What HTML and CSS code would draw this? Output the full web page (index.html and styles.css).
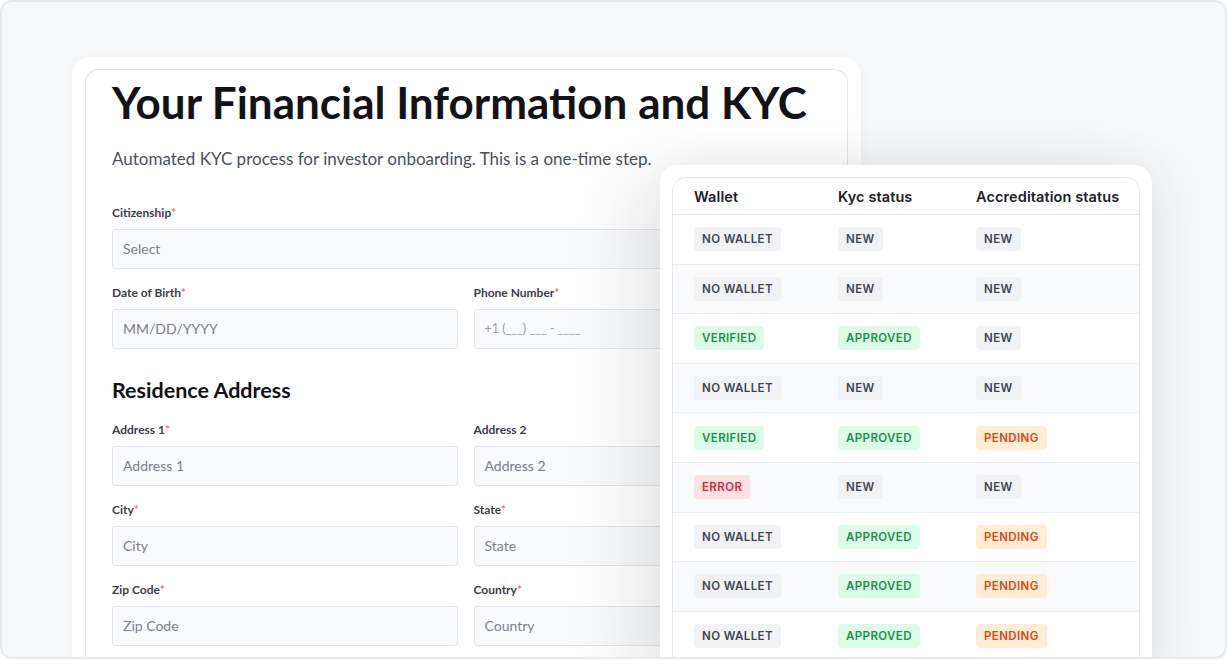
FILE: index.html
```html
<!DOCTYPE html>
<html lang="en">

<head>
    <meta charset="UTF-8" />
    <meta name="viewport" content="width=device-width, initial-scale=1.0" />
    <title>Financial Information and KYC</title>
    <link rel="stylesheet" href="styles.css">
</head>

<body>
    <div class="frame">
        <section class="shell form-shell">
            <div class="card form-card">
                <h1 class="title">Your Financial Information and KYC</h1>
                <p class="lead">Automated KYC process for investor onboarding. This is a one-time step.</p>

                <div class="fields">
                    <div class="field wide">
                        <label>Citizenship<span class="req">*</span></label>
                        <div class="input">Select</div>
                    </div>
                    <div class="field">
                        <label>Date of Birth<span class="req">*</span></label>
                        <div class="input">MM/DD/YYYY</div>
                    </div>
                    <div class="field">
                        <label>Phone Number<span class="req">*</span></label>
                        <div class="input small">+1 (___) ___ - ____</div>
                    </div>
                </div>

                <h2 class="section-title">Residence Address</h2>

                <div class="fields">
                    <div class="field">
                        <label>Address 1<span class="req">*</span></label>
                        <div class="input">Address 1</div>
                    </div>
                    <div class="field">
                        <label>Address 2</label>
                        <div class="input">Address 2</div>
                    </div>
                    <div class="field">
                        <label>City<span class="req">*</span></label>
                        <div class="input">City</div>
                    </div>
                    <div class="field">
                        <label>State<span class="req">*</span></label>
                        <div class="input">State</div>
                    </div>
                    <div class="field">
                        <label>Zip Code<span class="req">*</span></label>
                        <div class="input">Zip Code</div>
                    </div>
                    <div class="field">
                        <label>Country<span class="req">*</span></label>
                        <div class="input">Country</div>
                    </div>
                </div>
            </div>
        </section>

        <section class="shell table-shell">
            <div class="card table-card">
                <div class="row head">
                    <span>Wallet</span>
                    <span>Kyc status</span>
                    <span>Accreditation status</span>
                </div>
                <div class="row">
                    <span><b class="badge">No wallet</b></span>
                    <span><b class="badge">New</b></span>
                    <span><b class="badge">New</b></span>
                </div>
                <div class="row">
                    <span><b class="badge">No wallet</b></span>
                    <span><b class="badge">New</b></span>
                    <span><b class="badge">New</b></span>
                </div>
                <div class="row">
                    <span><b class="badge ok">Verified</b></span>
                    <span><b class="badge ok">Approved</b></span>
                    <span><b class="badge">New</b></span>
                </div>
                <div class="row">
                    <span><b class="badge">No wallet</b></span>
                    <span><b class="badge">New</b></span>
                    <span><b class="badge">New</b></span>
                </div>
                <div class="row">
                    <span><b class="badge ok">Verified</b></span>
                    <span><b class="badge ok">Approved</b></span>
                    <span><b class="badge warn">Pending</b></span>
                </div>
                <div class="row">
                    <span><b class="badge err">Error</b></span>
                    <span><b class="badge">New</b></span>
                    <span><b class="badge">New</b></span>
                </div>
                <div class="row">
                    <span><b class="badge">No wallet</b></span>
                    <span><b class="badge ok">Approved</b></span>
                    <span><b class="badge warn">Pending</b></span>
                </div>
                <div class="row">
                    <span><b class="badge">No wallet</b></span>
                    <span><b class="badge ok">Approved</b></span>
                    <span><b class="badge warn">Pending</b></span>
                </div>
                <div class="row">
                    <span><b class="badge">No wallet</b></span>
                    <span><b class="badge ok">Approved</b></span>
                    <span><b class="badge warn">Pending</b></span>
                </div>
            </div>
        </section>
    </div>
</body>

</html>
```

FILE: styles.css
```css
:root {
    --frame-bg: #f7f8fa;
    --line: #e5e7eb;
    --field-bg: #f9fafb;
    --txt-dark: #111318;
    --txt-label: #3a404b;
    --txt-muted: #4a515c;
    --form-font: "Lato", "Noto Sans", sans-serif;
    --table-font: "Inter", "Roboto", sans-serif;
}

* {
    box-sizing: border-box;
    margin: 0;
    padding: 0;
}

body {
    width: 1227px;
    height: 660px;
    overflow: hidden;
    background: #fff;
}

.frame {
    position: relative;
    width: 1227px;
    height: 659px;
    border: 2px solid #e7e9ed;
    border-radius: 12px;
    background: var(--frame-bg);
    overflow: hidden;
    padding: 55px 0 0 70px;
}

.shell {
    background: rgba(255, 255, 255, 0.85);
    border-radius: 18px;
}

.card {
    background: #fff;
    border: 1px solid var(--line);
    border-radius: 14px;
}

/* form */

.form-shell {
    width: 789px;
    height: 640px;
    padding: 12px 13px 0;
    box-shadow: 0 2px 14px rgba(17, 24, 39, 0.03);
}

.form-card {
    height: 100%;
    padding: 6px 28px 0 26px;
    font-family: var(--form-font);
    border-bottom: none;
    border-radius: 14px 14px 0 0;
}

.title {
    font-size: 44px;
    line-height: 1.2;
    font-weight: 700;
    color: var(--txt-dark);
    letter-spacing: 0;
}

.lead {
    margin-top: 16px;
    font-size: 17px;
    line-height: 27px;
    font-weight: 400;
    color: var(--txt-muted);
}

.fields {
    display: grid;
    grid-template-columns: 1fr 1fr;
    column-gap: 16px;
    row-gap: 16px;
    margin-top: 33px;
}

.section-title + .fields {
    margin-top: 18px;
}

.field.wide {
    grid-column: 1 / -1;
}

.field label {
    display: block;
    font-size: 12px;
    line-height: 16px;
    font-weight: 700;
    color: var(--txt-label);
    margin-bottom: 8px;
}

.req {
    color: #f47171;
}

.input {
    height: 40px;
    display: flex;
    align-items: center;
    padding: 0 10px;
    background: var(--field-bg);
    border: 1px solid #e3e6ea;
    border-radius: 3px;
    font-size: 14px;
    color: #7a808a;
}

.input.small {
    font-size: 12.5px;
    color: #9ca1aa;
}

.section-title {
    margin-top: 27px;
    font-size: 21.5px;
    line-height: 28px;
    font-weight: 700;
    color: var(--txt-dark);
}

/* table */

.table-shell {
    position: absolute;
    left: 658px;
    top: 163px;
    width: 492px;
    height: 520px;
    padding: 12px;
    background: #fff;
    box-shadow: -30px 10px 70px rgba(17, 24, 39, 0.1), 20px 0 50px rgba(17, 24, 39, 0.05);
}

.table-card {
    height: 100%;
    overflow: hidden;
    font-family: var(--table-font);
}

.row {
    display: grid;
    grid-template-columns: 144px 138px 1fr;
    align-items: center;
    height: 49.6px;
    padding-left: 21px;
    border-bottom: 1px solid #eceef1;
}

.row:nth-child(odd) {
    background: #f9fafb;
}

.row.head {
    height: 37px;
    background: #fff;
    font-size: 14.5px;
    font-weight: 600;
    color: #1d2129;
    border-bottom-color: #e7e9ec;
    letter-spacing: 0.1px;
}

.badge {
    display: inline-block;
    height: 24px;
    line-height: 24px;
    padding: 0 8px;
    border-radius: 4px;
    font-size: 11.5px;
    font-weight: 600;
    letter-spacing: 0.4px;
    text-transform: uppercase;
    background: #f1f2f4;
    color: #3f4550;
}

.badge.ok {
    background: #dcfce7;
    color: #16924a;
}

.badge.warn {
    background: #ffedd5;
    color: #d9480f;
}

.badge.err {
    background: #fee2e2;
    color: #dc2638;
}
```
